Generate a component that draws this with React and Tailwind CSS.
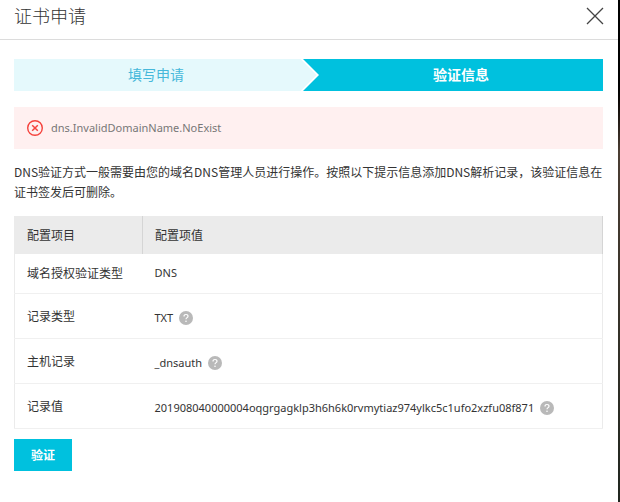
import React, { useState } from 'react';

const records = [
  { label: '域名授权验证类型', value: 'DNS' },
  { label: '记录类型', value: 'TXT', help: '解析记录的类型' },
  { label: '主机记录', value: '_dnsauth', help: '解析记录的主机名' },
  { label: '记录值', value: '201908040000004oqgrgagklp3h6h6k0rvmytiaz974ylkc5c1ufo2xzfu08f871', help: '解析记录的值' },
];

const CloseIcon = () => (
  <svg width="18" height="18" viewBox="0 0 18 18" fill="none" stroke="#444" strokeWidth="1.3">
    <path d="M1 1L17 17M17 1L1 17" />
  </svg>
);

const ErrorIcon = () => (
  <svg width="16" height="16" viewBox="0 0 16 16" fill="none" stroke="#f5423c" className="shrink-0">
    <circle cx="8" cy="8" r="7.3" strokeWidth="1.4" />
    <path d="M5.2 5.2L10.8 10.8M10.8 5.2L5.2 10.8" strokeWidth="1.5" />
  </svg>
);

const HelpIcon = () => (
  <svg width="14" height="14" viewBox="0 0 14 14" fill="none">
    <circle cx="7" cy="7" r="7" fill="#b9b9b9" />
    <path d="M5 5.5C5 4.2 5.9 3.5 7 3.5S9 4.2 9 5.3C9 6.6 7 6.7 7 8.3" stroke="#fff" strokeWidth="1.2" />
    <circle cx="7" cy="10.3" r="0.8" fill="#fff" />
  </svg>
);

const Steps = () => (
  <ol className="flex h-8 font-['Noto_Sans','Noto_Sans_CJK_SC',sans-serif] text-sm">
    <li className="flex flex-1 items-center justify-center bg-[#e5f9fc] text-[#46b8da]">填写申请</li>
    {/* Arrow between the two steps */}
    <li aria-hidden="true" className="bg-[#00c1de]">
      <svg width="21" height="32" viewBox="0 0 21 32">
        <path d="M0 0H5L21 16L5 32H0Z" fill="#fff" />
        <path d="M0 0H2.5L18.5 16L2.5 32H0Z" fill="#e5f9fc" />
      </svg>
    </li>
    <li aria-current="step" className="flex flex-1 items-center justify-center bg-[#00c1de] font-bold text-white">验证信息</li>
  </ol>
);

const App = () => {
  const [open, setOpen] = useState(true);
  const [error, setError] = useState('dns.InvalidDomainName.NoExist');

  return (
    <div className="min-h-screen bg-linear-to-b from-black from-14% via-[#4b3d33] via-30% to-[#20261f] pr-[2px] font-['Noto_Sans_CJK_SC',sans-serif] text-xs text-[#333]">
      {open && (
        <div className="min-h-screen bg-white">
          {/* Header */}
          <header className="flex h-10 items-center justify-between border-b border-[#dcdcdc] pr-3.5 pb-2 pl-3.5">
            <h1 className="font-['Noto_Sans','Noto_Sans_CJK_SC',sans-serif] text-lg font-light">证书申请</h1>
            <button aria-label="关闭" onClick={() => setOpen(false)} className="cursor-pointer">
              <CloseIcon />
            </button>
          </header>

          <main className="pt-[19px] pr-[15px] pb-8 pl-3.5">
            <Steps />

            {error && (
              <div role="alert" className="mt-4 flex h-[42px] items-center gap-2 bg-[#fff0f0] pl-[13px] font-['Noto_Sans',sans-serif] text-[11px] text-[#777]">
                <ErrorIcon />
                {error}
              </div>
            )}

            <p className="mt-[13px] leading-5">
              DNS验证方式一般需要由您的域名DNS管理人员进行操作。按照以下提示信息添加DNS解析记录，该验证信息在证书签发后可删除。
            </p>

            {/* DNS record */}
            <table className="mt-3.5 w-full border-collapse border border-[#ebebeb] text-left">
              <thead>
                <tr className="h-[37px] bg-[#ebebeb]">
                  <th className="w-32 border-r border-[#d5d5d5] pl-3 font-normal">配置项目</th>
                  <th className="border-r border-[#d5d5d5] pl-3 font-normal">配置项值</th>
                </tr>
              </thead>
              <tbody>
                {records.map(record => (
                  <tr key={record.label} className={`border-b border-[#f0f0f0] ${record.help ? 'h-[45px]' : 'h-10'}`}>
                    <td className="pl-3">{record.label}</td>
                    <td className="pl-3 font-['Noto_Sans',sans-serif] text-[11px]">
                      {record.help ? (
                        <div className="flex items-center gap-1.5 pt-1">
                          {record.value}
                          <span title={record.help}><HelpIcon /></span>
                        </div>
                      ) : record.value}
                    </td>
                  </tr>
                ))}
              </tbody>
            </table>

            <button onClick={() => setError('')} className="mt-2.5 h-8 cursor-pointer bg-[#00c1de] px-[17px] font-bold text-white">
              验证
            </button>
          </main>
        </div>
      )}
    </div>
  );
};

export default App;
